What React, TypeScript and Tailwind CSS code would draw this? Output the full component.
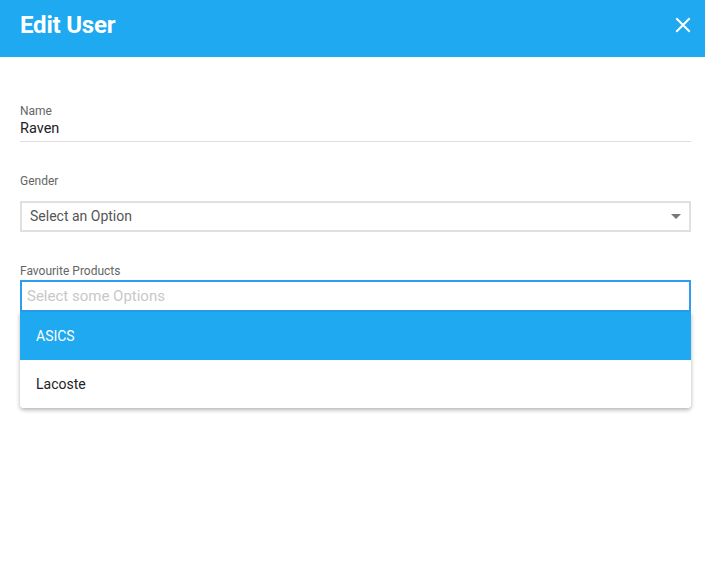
import React from 'react';

const options = ['ASICS', 'Lacoste'];

export default function App() {
  return (
    <div className="w-[705px] h-[588px] bg-white font-['Roboto',sans-serif]">
      {/* Header */}
      <div className="h-[57px] bg-[#1ea9f1] flex items-center justify-between pl-5 pr-[14px] pb-[7px]">
        <h1 className="text-[24px] font-bold text-white tracking-[-0.2px] leading-none">Edit User</h1>
        <svg width="16" height="16" viewBox="0 0 16 16" className="text-white">
          <path d="M2 2 L14 14 M14 2 L2 14" stroke="currentColor" strokeWidth="2" strokeLinecap="square" />
        </svg>
      </div>

      <div className="pl-5 pr-[14px] pt-[47px]">
        {/* Name */}
        <div>
          <label className="block text-[12px] text-[#666] leading-[14px]">Name</label>
          <div className="text-[14.5px] text-[#222] leading-[20px] pt-[1px] pb-[2px] border-b border-[#dedede]">Raven</div>
        </div>

        {/* Gender */}
        <div className="mt-[32px]">
          <label className="block text-[12px] text-[#666] leading-[14px]">Gender</label>
          <div className="mt-[13px] h-[31px] border-2 border-[#e0e0e0] flex items-center justify-between pl-2 pr-[8px]">
            <span className="text-[14px] text-[#555]">Select an Option</span>
            <svg width="10" height="5" viewBox="0 0 10 5">
              <path d="M0 0 L10 0 L5 5 Z" fill="#777" />
            </svg>
          </div>
        </div>

        {/* Favourite Products */}
        <div className="mt-[32px] relative">
          <label className="block text-[12px] text-[#666] leading-[14px]">Favourite Products</label>
          <div className="mt-[2px] h-[32px] border-2 border-[#2e9df0] flex items-center px-[5px]">
            <span className="text-[15px] text-[#c8c8c8]">Select some Options</span>
          </div>
          <div className="bg-white rounded-b-[4px] shadow-[0_2px_4px_rgba(0,0,0,0.3)] overflow-hidden">
            {options.map((o, i) => (
              <div
                key={o}
                className={`h-[48px] flex items-center pl-4 text-[14px] ${i === 0 ? 'bg-[#1ea9f1] text-white' : 'bg-white text-[#222]'}`}
              >
                {o}
              </div>
            ))}
          </div>
        </div>
      </div>
    </div>
  );
}
